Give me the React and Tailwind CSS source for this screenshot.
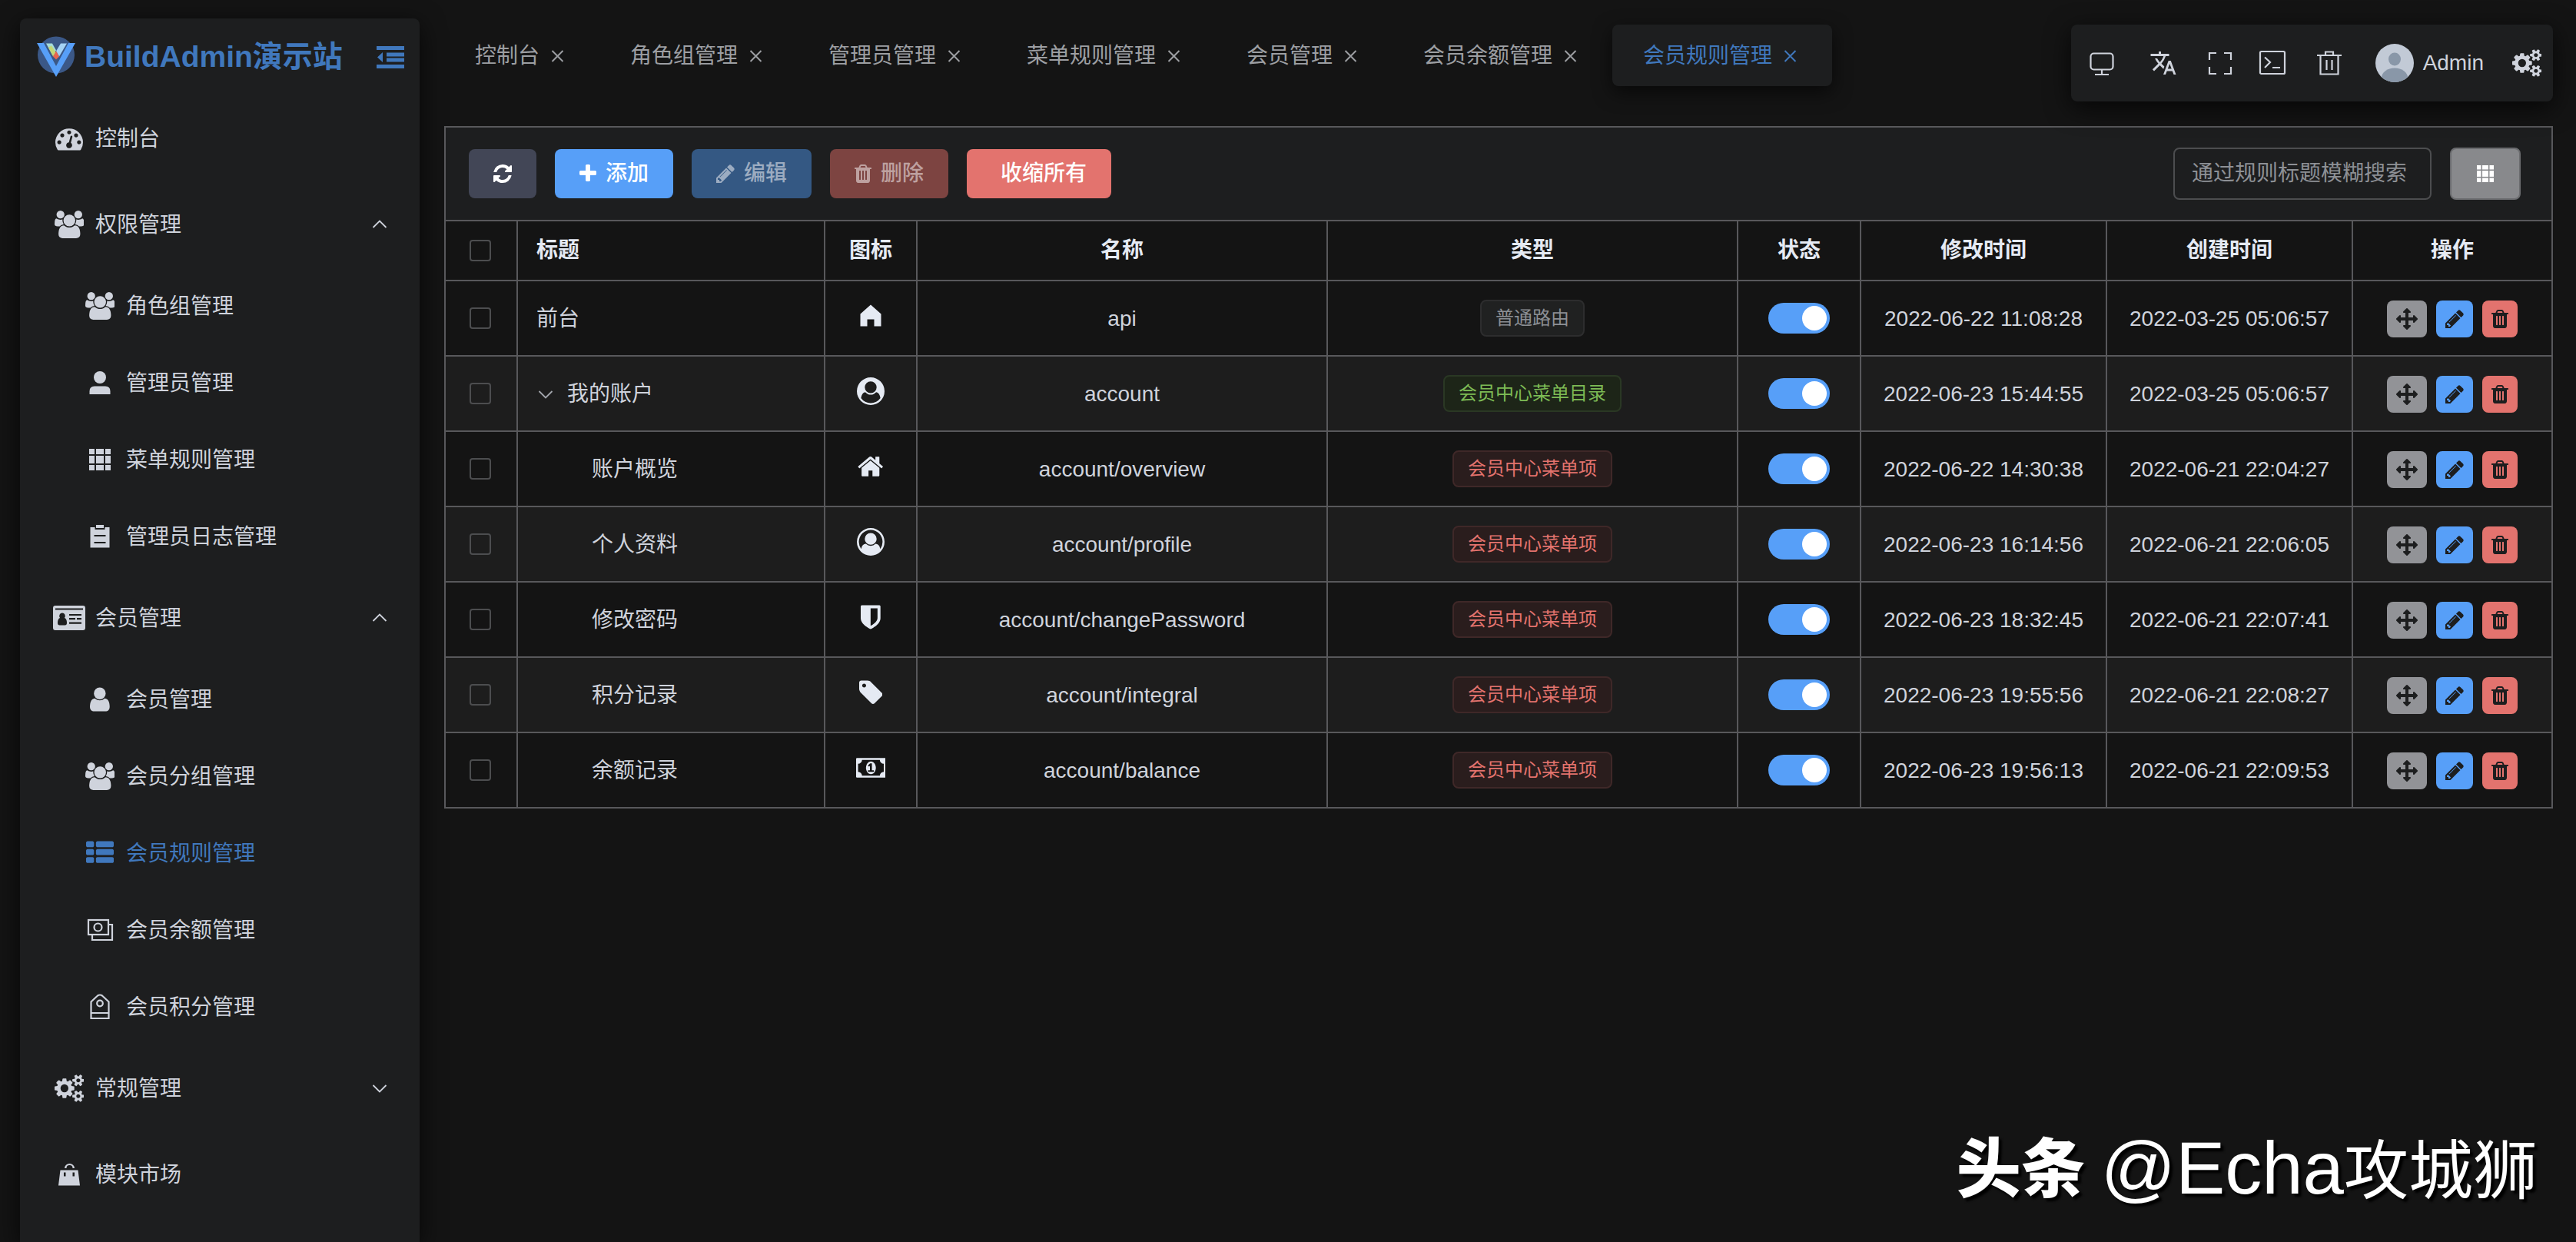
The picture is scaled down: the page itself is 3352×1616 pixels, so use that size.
import React, { useState } from "react";
import clsx from "clsx";
import { MdTranslate } from "react-icons/md";

// Font Awesome 4 glyphs, [viewBox, path]
const glyphs = {
  dashboard: [
    "0 0 1792 1792",
    "M384 1152q0-53-37.5-90.5t-90.5-37.5-90.5 37.5-37.5 90.5 37.5 90.5 90.5 37.5 90.5-37.5 37.5-90.5zm192-448q0-53-37.5-90.5t-90.5-37.5-90.5 37.5-37.5 90.5 37.5 90.5 90.5 37.5 90.5-37.5 37.5-90.5zm428 481l101-382q6-26-7.5-48.5t-38.5-29.5-48 6.5-30 39.5l-101 382q-60 5-107 43.5t-63 98.5q-20 77 20 146t117 89 146-20 89-117q16-60-6-117t-72-91zm660-33q0-53-37.5-90.5t-90.5-37.5-90.5 37.5-37.5 90.5 37.5 90.5 90.5 37.5 90.5-37.5 37.5-90.5zm-640-640q0-53-37.5-90.5t-90.5-37.5-90.5 37.5-37.5 90.5 37.5 90.5 90.5 37.5 90.5-37.5 37.5-90.5zm448 192q0-53-37.5-90.5t-90.5-37.5-90.5 37.5-37.5 90.5 37.5 90.5 90.5 37.5 90.5-37.5 37.5-90.5zm320 448q0 261-141 483-19 29-54 29h-1402q-35 0-54-29-141-221-141-483 0-182 71-348t191-286 286-191 348-71 348 71 286 191 191 286 71 348z",
  ],
  group: [
    "-64 0 1920 1792",
    "M529 896q-162 5-265 128h-134q-82 0-138-40.5t-56-118.5q0-353 124-353 6 0 43.5 21t97.5 42.5 119 21.5q67 0 133-23-5 37-5 66 0 139 81 256zm1071 637q0 120-73 189.5t-194 69.5h-874q-121 0-194-69.5t-73-189.5q0-53 3.5-103.5t14-109 26.5-108.5 43-97.5 62-81 85.5-53.5 111.5-20q10 0 43 21.5t73 48 107 48 135 21.5 135-21.5 107-48 73-48 43-21.5q61 0 111.5 20t85.5 53.5 62 81 43 97.5 26.5 108.5 14 109 3.5 103.5zm-1024-1277q0 106-75 181t-181 75-181-75-75-181 75-181 181-75 181 75 75 181zm704 384q0 159-112.5 271.5t-271.5 112.5-271.5-112.5-112.5-271.5 112.5-271.5 271.5-112.5 271.5 112.5 112.5 271.5zm576 225q0 78-56 118.5t-138 40.5h-134q-103-123-265-128 81-117 81-256 0-29-5-66 66 23 133 23 59 0 119-21.5t97.5-42.5 43.5-21q124 0 124 353zm-128-609q0 106-75 181t-181 75-181-75-75-181 75-181 181-75 181 75 75 181z",
  ],
  user: [
    "256 0 1280 1792",
    "M1536 1399q0 109-62.5 187t-150.5 78h-854q-88 0-150.5-78t-62.5-187q0-85 8.5-160.5t31.5-152 58.5-131 94-89 134.5-34.5q131 128 313 128t313-128q76 0 134.5 34.5t94 89 58.5 131 31.5 152 8.5 160.5zm-256-887q0 159-112.5 271.5t-271.5 112.5-271.5-112.5-112.5-271.5 112.5-271.5 271.5-112.5 271.5 112.5 112.5 271.5z",
  ],
  thList: [
    "0 0 1792 1792",
    "M512 1248v192q0 40-28 68t-68 28h-320q-40 0-68-28t-28-68v-192q0-40 28-68t68-28h320q40 0 68 28t28 68zm0-512v192q0 40-28 68t-68 28h-320q-40 0-68-28t-28-68v-192q0-40 28-68t68-28h320q40 0 68 28t28 68zm1280 512v192q0 40-28 68t-68 28h-960q-40 0-68-28t-28-68v-192q0-40 28-68t68-28h960q40 0 68 28t28 68zm-1280-1024v192q0 40-28 68t-68 28h-320q-40 0-68-28t-28-68v-192q0-40 28-68t68-28h320q40 0 68 28t28 68zm1280 512v192q0 40-28 68t-68 28h-960q-40 0-68-28t-28-68v-192q0-40 28-68t68-28h960q40 0 68 28t28 68zm0-512v192q0 40-28 68t-68 28h-960q-40 0-68-28t-28-68v-192q0-40 28-68t68-28h960q40 0 68 28t28 68z",
  ],
  cogs: [
    "-64 0 1920 1792",
    "M832 896q0-106-75-181t-181-75-181 75-75 181 75 181 181 75 181-75 75-181zm768 512q0-52-38-90t-90-38-90 38-38 90q0 53 37.5 90.5t90.5 37.5 90.5-37.5 37.5-90.5zm0-1024q0-52-38-90t-90-38-90 38-38 90q0 53 37.5 90.5t90.5 37.5 90.5-37.5 37.5-90.5zm-384 421v185q0 10-7 19.5t-16 10.5l-155 24q-11 35-32 76 34 48 90 115 7 11 7 20 0 12-7 19-23 30-82.5 89.5t-78.5 59.5q-11 0-21-7l-115-90q-37 19-77 31-11 108-23 155-7 24-30 24h-186q-11 0-20-7.5t-10-17.5l-23-153q-34-10-75-31l-118 89q-7 7-20 7-11 0-21-8-144-133-144-160 0-9 7-19 10-14 41-53t47-61q-23-44-35-82l-152-24q-10-1-17-9.5t-7-19.5v-185q0-10 7-19.5t16-10.5l155-24q11-35 32-76-34-48-90-115-7-11-7-20 0-12 7-20 22-30 82-89t79-59q11 0 21 7l115 90q34-18 77-32 11-108 23-154 7-24 30-24h186q11 0 20 7.5t10 17.5l23 153q34 10 75 31l118-89q8-7 20-7 11 0 21 8 144 133 144 160 0 8-7 19-12 16-42 54t-45 60q23 48 34 82l152 23q10 2 17 10.5t7 19.5zm640 533v140q0 16-149 31-12 27-30 52 51 113 51 138 0 4-4 7-122 71-124 71-8 0-46-47t-52-68q-20 2-30 2t-30-2q-14 21-52 68t-46 47q-2 0-124-71-4-3-4-7 0-25 51-138-18-25-30-52-149-15-149-31v-140q0-16 149-31 13-29 30-52-51-113-51-138 0-4 4-7 4-2 35-20t59-34 30-16q8 0 46 46.5t52 67.5q20-2 30-2t30 2q51-71 92-112l6-2q4 0 124 70 4 3 4 7 0 25-51 138 17 23 30 52 149 15 149 31zm0-1024v140q0 16-149 31-12 27-30 52 51 113 51 138 0 4-4 7-122 71-124 71-8 0-46-47t-52-68q-20 2-30 2t-30-2q-14 21-52 68t-46 47q-2 0-124-71-4-3-4-7 0-25 51-138-18-25-30-52-149-15-149-31v-140q0-16 149-31 13-29 30-52-51-113-51-138 0-4 4-7 4-2 35-20t59-34 30-16q8 0 46 46.5t52 67.5q20-2 30-2t30 2q51-71 92-112l6-2q4 0 124 70 4 3 4 7 0 25-51 138 17 23 30 52 149 15 149 31z",
  ],
  refresh: [
    "128 0 1536 1792",
    "M1639 1056q0 5-1 7-64 268-268 434.5t-478 166.5q-146 0-282.5-55t-243.5-157l-129 129q-19 19-45 19t-45-19-19-45v-448q0-26 19-45t45-19h448q26 0 45 19t19 45-19 45l-137 137q71 66 161 102t187 36q134 0 250-65t186-179q11-17 53-117 8-23 30-23h192q13 0 22.5 9.5t9.5 22.5zm25-800v448q0 26-19 45t-45 19h-448q-26 0-45-19t-19-45 19-45l138-138q-148-137-349-137-134 0-250 65t-186 179q-11 17-53 117-8 23-30 23h-199q-13 0-22.5-9.5t-9.5-22.5v-7q65-268 270-434.5t480-166.5q146 0 284 55.5t245 156.5l130-129q19-19 45-19t45 19 19 45z",
  ],
  plus: [
    "192 0 1408 1792",
    "M1600 736v192q0 40-28 68t-68 28h-416v416q0 40-28 68t-68 28h-192q-40 0-68-28t-28-68v-416h-416q-40 0-68-28t-28-68v-192q0-40 28-68t68-28h416v-416q0-40 28-68t68-28h192q40 0 68 28t28 68v416h416q40 0 68 28t28 68z",
  ],
  pencil: [
    "128 0 1536 1792",
    "M491 1536l91-91-235-235-91 91v107h128v128h107zm523-928q0-22-22-22-10 0-17 7l-542 542q-7 7-7 17 0 22 22 22 10 0 17-7l542-542q7-7 7-17zm-54-192l416 416-832 832h-416v-416zm683 96q0 53-37 90l-166 166-416-416 166-165q36-38 90-38 53 0 91 38l235 234q37 39 37 91z",
  ],
  trash: [
    "192 0 1408 1792",
    "M704 1376v-704q0-14-9-23t-23-9h-64q-14 0-23 9t-9 23v704q0 14 9 23t23 9h64q14 0 23-9t9-23zm256 0v-704q0-14-9-23t-23-9h-64q-14 0-23 9t-9 23v704q0 14 9 23t23 9h64q14 0 23-9t9-23zm256 0v-704q0-14-9-23t-23-9h-64q-14 0-23 9t-9 23v704q0 14 9 23t23 9h64q14 0 23-9t9-23zm-544-992h448l-48-117q-7-9-17-11h-317q-10 2-17 11zm928 32v64q0 14-9 23t-23 9h-96v948q0 83-47 143.5t-113 60.5h-832q-66 0-113-58.5t-47-141.5v-952h-96q-14 0-23-9t-9-23v-64q0-14 9-23t23-9h309l70-167q15-37 54-63t79-26h320q40 0 79 26t54 63l70 167h309q14 0 23 9t9 23z",
  ],
  arrows: [
    "0 0 1792 1792",
    "M1792 896q0 26-19 45l-256 256q-19 19-45 19t-45-19-19-45v-128h-384v384h128q26 0 45 19t19 45-19 45l-256 256q-19 19-45 19t-45-19l-256-256q-19-19-19-45t19-45 45-19h128v-384h-384v128q0 26-19 45t-45 19-45-19l-256-256q-19-19-19-45t19-45l256-256q19-19 45-19t45 19 19 45v128h384v-384h-128q-26 0-45-19t-19-45 19-45l256-256q19-19 45-19t45 19l256 256q19 19 19 45t-19 45-45 19h-128v384h384v-128q0-26 19-45t45-19 45 19l256 256q19 19 19 45z",
  ],
  home: [
    "64 0 1664 1792",
    "M1472 992v480q0 26-19 45t-45 19h-384v-384h-256v384h-384q-26 0-45-19t-19-45v-480q0-1 .5-3t.5-3l575-474 575 474q1 2 1 6zm223-69l-62 74q-8 9-21 11h-3q-13 0-21-7l-692-577-692 577q-12 8-24 7-13-2-21-11l-62-74q-8-10-7-23.5t11-21.5l719-599q32-26 76-26t76 26l244 204v-195q0-14 9-23t23-9h192q14 0 23 9t9 23v408l219 182q10 8 11 21.5t-7 23.5z",
  ],
  userCircle: [
    "0 0 1792 1792",
    "M1523 1339q-22-155-87.5-257.5t-184.5-118.5q-67 74-159.5 115.5t-195.5 41.5-195.5-41.5-159.5-115.5q-119 16-184.5 118.5t-87.5 257.5q106 150 271 237.5t356 87.5 356-87.5 271-237.5zm-243-699q0-159-112.5-271.5t-271.5-112.5-271.5 112.5-112.5 271.5 112.5 271.5 271.5 112.5 271.5-112.5 112.5-271.5zm512 256q0 182-71 347.5t-190.5 286-285.5 191.5-349 71q-182 0-348-71t-286-191-191-286-71-348 71-348 191-286 286-191 348-71 348 71 286 191 191 286 71 348z",
  ],
  userCircleO: [
    "0 0 1792 1792",
    "M896 0q182 0 348 71t286 191 191 286 71 348q0 181-70.5 347t-190.5 286-286 191.5-349 71.5-349-71-285.5-191.5-190.5-286-71-347.5 71-348 191-286 286-191 348-71zm619 1351q149-205 149-455 0-156-61-298t-164-245-245-164-298-61-298 61-245 164-164 245-61 298q0 250 149 455 66-327 306-327 131 128 313 128t313-128q240 0 306 327zm-235-647q0-159-112.5-271.5t-271.5-112.5-271.5 112.5-112.5 271.5 112.5 271.5 271.5 112.5 271.5-112.5 112.5-271.5z",
  ],
  shield: [
    "256 0 1280 1792",
    "M1344 960v-640h-448v1137q119-63 213-137 235-184 235-360zm192-768v768q0 86-33.5 170.5t-83 150-118 127.5-126.5 103-121 77.5-89.5 49.5-42.5 20q-12 6-26 6t-26-6q-16-7-42.5-20t-89.5-49.5-121-77.5-126.5-103-118-127.5-83-150-33.5-170.5v-768q0-26 19-45t45-19h1152q26 0 45 19t19 45z",
  ],
  tag: [
    "128 0 1536 1792",
    "M576 448q0-53-37.5-90.5t-90.5-37.5-90.5 37.5-37.5 90.5 37.5 90.5 90.5 37.5 90.5-37.5 37.5-90.5zm1067 576q0 53-37 90l-491 492q-39 37-91 37-53 0-90-37l-715-716q-38-37-64.5-101t-26.5-117v-416q0-52 38-90t90-38h416q53 0 117 26.5t102 64.5l715 714q37 39 37 91z",
  ],
  money: [
    "0 0 1920 1792",
    "M768 1152h384v-96h-128v-448h-114l-148 137 77 80q42-37 55-57h2v288h-128v96zm512-256q0 70-21 142t-59.5 134-101.5 101-138 39-138-39-101.5-101-59.5-134-21-142 21-142 59.5-134 101.5-101 138-39 138 39 101.5 101 59.5 134 21 142zm512 256v-512q-106 0-181-75t-75-181h-1152q0 106-75 181t-181 75v512q106 0 181 75t75 181h1152q0-106 75-181t181-75zm128-832v1152q0 26-19 45t-45 19h-1792q-26 0-45-19t-19-45v-1152q0-26 19-45t45-19h1792q26 0 45 19t19 45z",
  ],
};

const Glyph = ({ name, className = "h-9" }) => (
  <svg viewBox={glyphs[name][0]} fill="currentColor" className={clsx("w-auto shrink-0", className)} aria-hidden="true">
    <path d={glyphs[name][1]} />
  </svg>
);

// Outline icons on a 36 grid
const Line = ({ children }) => (
  <svg viewBox="0 0 36 36" fill="none" stroke="currentColor" strokeWidth="2.2" className="size-9 shrink-0" aria-hidden="true">
    {children}
  </svg>
);

const Solid = ({ children }) => (
  <svg viewBox="0 0 36 36" fill="currentColor" className="size-9 shrink-0" aria-hidden="true">
    {children}
  </svg>
);

const GridIcon = ({ className = "size-7" }) => (
  <svg viewBox="0 0 28 28" fill="currentColor" className={className} aria-hidden="true">
    {[[0, 7], [9, 10], [21, 7]].map(([y, h]) =>
      [[0, 7], [9, 10], [21, 7]].map(([x, w]) => <rect key={`${x}-${y}`} x={x} y={y} width={w} height={h} />)
    )}
  </svg>
);

const AdminIcon = () => (
  <Solid>
    <circle cx="18" cy="11" r="8" />
    <path d="M4.500 33v-4q0-6.500 6.500-6.500h14q6.500 0 6.500 6.500v4z" />
  </Solid>
);

const ClipboardIcon = () => (
  <Solid>
    <path d="M5.500 6h6v3h13v-3h6v26.500h-25zM13 3h10v4h-10zM10.500 16v2h15v-2zM10.500 25v2h15v-2z" fillRule="evenodd" />
  </Solid>
);

const CardIcon = () => (
  <svg viewBox="0 0 42 32" fill="currentColor" className="h-8 w-[42px] shrink-0" aria-hidden="true">
    <path
      fillRule="evenodd"
      d="M3 0h36q3 0 3 3v26q0 3-3 3h-36q-3 0-3-3v-26q0-3 3-3zM3 3.500v2h36v-2zM12 9.500a3.800 4 0 0 0-3 6.500q-3 1-3 6.500 0 3 2.500 3h7q2.500 0 2.500-3 0-5.500-3-6.500a3.800 4 0 0 0-3-6.500zM21 11v2h16v-2zM21 16v2.300h8v-2.300zM31 16v2.300h6v-2.300zM21 21.500v2.300h16v-2.300z"
    />
  </svg>
);

const BalanceIcon = () => (
  <Line>
    <rect x="3" y="5" width="26" height="19" />
    <circle cx="15.500" cy="14.500" r="5" />
    <path d="M29 11h5v20h-26v-7" />
  </Line>
);

const PointsIcon = () => (
  <Line>
    <path d="M6.500 33v-21.500l8.500-8q3-2 6 0l8.500 8v21.500zM6.500 26h23" />
    <circle cx="18" cy="13.500" r="3.800" />
  </Line>
);

const BagIcon = () => (
  <Solid>
    <path d="M12 10a6.500 6 0 0 1 13 0h-2.500a4 4 0 0 0-8 0z" />
    <path d="M6.500 12.500h23l2.500 20h-28zM11 15.500v5h2.500v-5zM22.500 15.500v5h2.500v-5z" fillRule="evenodd" />
  </Solid>
);

const HouseIcon = () => (
  <Solid>
    <path d="M18 3.500l13.500 12v16h-9v-9h-9v9h-9v-16z" />
  </Solid>
);

const Chevron = ({ up }) => (
  <svg viewBox="0 0 24 24" fill="none" stroke="currentColor" strokeWidth="1.800" className={clsx("size-6 shrink-0", up && "rotate-180")} aria-hidden="true">
    <path d="M3.500 8l8.500 8.500 8.500-8.500" />
  </svg>
);

const Logo = () => (
  <svg viewBox="0 0 50 54" className="h-[54px] w-[50px] shrink-0" aria-hidden="true">
    <circle cx="25" cy="24.500" r="24" fill="#3b5887" />
    <path d="M0 9h9l16 30 16-30h9l-25 44z" fill="#579ff8" />
    <path d="M12 9.500h8l5 9-5 6z" fill="#a5dbd8" />
    <path d="M15 14.500l4-2 6 9-4 5z" fill="#c3d877" />
    <path d="M25 19.500l6-10h8l-10 17z" fill="#a5d3f5" />
    <path d="M25 19.500l4 7-4 4-4-4z" fill="#e8654e" />
  </svg>
);

const menus = [
  { title: "控制台", icon: <Glyph name="dashboard" /> },
  {
    title: "权限管理",
    icon: <Glyph name="group" />,
    children: [
      { title: "角色组管理", icon: <Glyph name="group" /> },
      { title: "管理员管理", icon: <AdminIcon /> },
      { title: "菜单规则管理", icon: <GridIcon /> },
      { title: "管理员日志管理", icon: <ClipboardIcon /> },
    ],
  },
  {
    title: "会员管理",
    icon: <CardIcon />,
    children: [
      { title: "会员管理", icon: <Glyph name="user" /> },
      { title: "会员分组管理", icon: <Glyph name="group" /> },
      { title: "会员规则管理", icon: <Glyph name="thList" />, active: true },
      { title: "会员余额管理", icon: <BalanceIcon /> },
      { title: "会员积分管理", icon: <PointsIcon /> },
    ],
  },
  { title: "常规管理", icon: <Glyph name="cogs" />, children: [] },
  { title: "模块市场", icon: <BagIcon /> },
];

const tabs = ["控制台", "角色组管理", "管理员管理", "菜单规则管理", "会员管理", "会员余额管理", "会员规则管理"];

const rules = [
  { title: "前台", level: 0, icon: <HouseIcon />, name: "api", type: "route", updated: "2022-06-22 11:08:28", created: "2022-03-25 05:06:57" },
  { title: "我的账户", level: 0, open: true, icon: <Glyph name="userCircle" />, name: "account", type: "dir", updated: "2022-06-23 15:44:55", created: "2022-03-25 05:06:57" },
  { title: "账户概览", level: 1, icon: <Glyph name="home" />, name: "account/overview", type: "item", updated: "2022-06-22 14:30:38", created: "2022-06-21 22:04:27" },
  { title: "个人资料", level: 1, icon: <Glyph name="userCircleO" />, name: "account/profile", type: "item", updated: "2022-06-23 16:14:56", created: "2022-06-21 22:06:05" },
  { title: "修改密码", level: 1, icon: <Glyph name="shield" />, name: "account/changePassword", type: "item", updated: "2022-06-23 18:32:45", created: "2022-06-21 22:07:41" },
  { title: "积分记录", level: 1, icon: <Glyph name="tag" />, name: "account/integral", type: "item", updated: "2022-06-23 19:55:56", created: "2022-06-21 22:08:27" },
  { title: "余额记录", level: 1, icon: <Glyph name="money" />, name: "account/balance", type: "item", updated: "2022-06-23 19:56:13", created: "2022-06-21 22:09:53" },
];

const types = {
  route: { label: "普通路由", style: "bg-[#202121] border-[#2d2d2e] text-[#8c8f94]" },
  dir: { label: "会员中心菜单目录", style: "bg-[#1d2518] border-[#2a3824] text-[#7dbb55]" },
  item: { label: "会员中心菜单项", style: "bg-[#2a1d1d] border-[#3f2828] text-[#e3736e]" },
};

const SubItem = ({ item }) => (
  <a
    href="#"
    className={clsx("flex h-25 items-center gap-2.5 pl-20 pr-10", item.active ? "text-[#4078bd]" : "text-[#cfd3dc]")}
  >
    <span className="flex w-12 justify-center">{item.icon}</span>
    <span className="pt-0.5">{item.title}</span>
  </a>
);

const Sidebar = () => {
  const [opened, setOpened] = useState(["权限管理", "会员管理"]);

  const toggle = (title) => {
    setOpened(opened.includes(title) ? opened.filter((t) => t !== title) : [...opened, title]);
  };

  return (
    <aside className="mt-6 ml-[26px] w-[520px] shrink-0 rounded-t-lg bg-[#1d1e1f] text-[#cfd3dc] shadow-[0_8px_32px_rgba(0,0,0,0.72)]">
      <div className="flex h-25 items-center pl-[22px] pr-5 text-[#4078bd]">
        <Logo />
        <h1 className="ml-3 flex-1 whitespace-nowrap text-[39px] leading-[52px] font-bold">BuildAdmin演示站</h1>
        <button type="button" aria-label="收起菜单">
          <svg viewBox="0 0 36 36" fill="currentColor" className="size-9" aria-hidden="true">
            <path d="M0 4h36v5h-36zM13 12.500h23v5h-23zM13 19.500h23v5h-23zM0 28h36v5h-36zM8 12v13l-7-6.500z" />
          </svg>
        </button>
      </div>
      <nav>
        {menus.map((menu) =>
          menu.children ? (
            <div key={menu.title}>
              <button
                type="button"
                onClick={() => toggle(menu.title)}
                className="flex h-28 w-full items-center gap-2.5 px-10 text-left"
              >
                <span className="flex w-12 justify-center">{menu.icon}</span>
                <span className="flex-1 pt-0.5">{menu.title}</span>
                <Chevron up={opened.includes(menu.title)} />
              </button>
              {opened.includes(menu.title) && menu.children.map((item) => <SubItem key={item.title} item={item} />)}
            </div>
          ) : (
            <a key={menu.title} href="#" className="flex h-28 items-center gap-2.5 px-10">
              <span className="flex w-12 justify-center">{menu.icon}</span>
              <span className="pt-0.5">{menu.title}</span>
            </a>
          )
        )}
      </nav>
    </aside>
  );
};

const NavTabs = () => {
  const [active, setActive] = useState("会员规则管理");

  return (
    <div className="flex">
      {tabs.map((tab) => (
        <div
          key={tab}
          className={clsx(
            "flex h-20 items-center gap-2.5 rounded-lg px-10 whitespace-nowrap",
            active === tab ? "bg-[#1d1e1f] text-[#4078bd] shadow-[0_8px_24px_rgba(0,0,0,0.6)]" : "text-[#9d9fa3]"
          )}
        >
          <button type="button" onClick={() => setActive(tab)} className="pt-0.5">
            {tab}
          </button>
          <button type="button" aria-label={`关闭${tab}`}>
            <svg viewBox="0 0 28 28" fill="none" stroke="currentColor" strokeWidth="2" className="size-7" aria-hidden="true">
              <path d="M6.500 8l14 14M20.500 8l-14 14" />
            </svg>
          </button>
        </div>
      ))}
    </div>
  );
};

const NavMenus = () => (
  <div className="flex h-25 items-stretch rounded-lg bg-[#1d1e1f] text-[#cfd3dc] shadow-[0_8px_32px_rgba(0,0,0,0.72)]">
    <button type="button" aria-label="首页" className="flex w-20 items-center justify-center">
      <Line>
        <rect x="3.500" y="5.500" width="29" height="21" rx="4" />
        <path d="M18 26.500v6.500M9 33h18" />
      </Line>
    </button>
    <button type="button" aria-label="语言" className="flex w-20 items-center justify-center">
      <MdTranslate className="size-9" />
    </button>
    <button type="button" aria-label="全屏" className="flex w-17 items-center justify-center">
      <Line>
        <path d="M4 14v-9h9M23 5h9v9M32 23v9h-9M13 32h-9v-9" />
      </Line>
    </button>
    <button type="button" aria-label="终端" className="flex w-17 items-center justify-center">
      <Line>
        <rect x="2" y="3" width="32" height="29" rx="1.500" />
        <path d="M8 10.500l7 6.500-7 7M18 24h10" />
      </Line>
    </button>
    <button type="button" aria-label="清理缓存" className="flex w-20 items-center justify-center">
      <Line>
        <path d="M2 8h32M13 8v-4.500h10v4.500M6.500 8v24.500h23v-24.500M14.500 14v13M21.500 14v13" />
      </Line>
    </button>
    <button type="button" className="flex items-center gap-3 pr-5.5 pl-5">
      <svg viewBox="0 0 50 50" className="size-[50px] rounded-full" aria-hidden="true">
        <rect width="50" height="50" fill="#c2cad6" />
        <ellipse cx="25" cy="20" rx="8" ry="8.500" fill="#8997a8" />
        <ellipse cx="25" cy="44" rx="17" ry="12.500" fill="#8997a8" />
      </svg>
      Admin
    </button>
    <button type="button" aria-label="设置" className="flex w-17 items-center justify-center">
      <Glyph name="cogs" />
    </button>
  </div>
);

const Toolbar = () => {
  const [keyword, setKeyword] = useState("");

  return (
    <div className="flex h-[122px] items-center border-b-2 border-[#58585b] bg-[#1d1e1f] pl-[30px] pr-10">
      <div className="flex flex-1 items-center gap-6 font-medium text-white">
        <button type="button" aria-label="刷新" className="flex h-16 items-center rounded-lg bg-[#424656] px-8">
          <Glyph name="refresh" className="h-7" />
        </button>
        <button type="button" className="flex h-16 items-center gap-3 rounded-lg bg-[#579ff8] px-8">
          <Glyph name="plus" className="h-7" />
          添加
        </button>
        <button type="button" disabled className="flex h-16 items-center gap-3 rounded-lg bg-[#345883] px-8 text-[#9cacc1]">
          <Glyph name="pencil" className="h-7" />
          编辑
        </button>
        <button type="button" disabled className="flex h-16 items-center gap-3 rounded-lg bg-[#7d4441] px-8 text-[#bea1a0]">
          <Glyph name="trash" className="h-7" />
          删除
        </button>
        <button type="button" className="flex h-16 items-center rounded-lg bg-[#e3736e] pl-11 pr-8">
          收缩所有
        </button>
      </div>
      <input
        type="text"
        aria-label="搜索"
        placeholder="通过规则标题模糊搜索"
        value={keyword}
        onChange={(e) => setKeyword(e.target.value)}
        className="mr-6 h-17 w-84 rounded-lg border-2 border-[#4c4d4f] bg-transparent px-[22px] text-[#cfd3dc] placeholder:text-[#8d9095]"
      />
      <button
        type="button"
        aria-label="列设置"
        className="flex h-17 w-23 items-center justify-center rounded-lg border-2 border-[#6b6c6f] bg-[#88898c] text-white"
      >
        <GridIcon className="size-[22px]" />
      </button>
    </div>
  );
};

const checkbox = "block mx-auto size-7 appearance-none rounded border-2 border-[#4c4d4f] checked:bg-[#579ff8]";
const cell = "border-r-2 border-b-2 border-[#58585b] last:border-r-0";

const RuleRow = ({ rule, striped }) => {
  const [enabled, setEnabled] = useState(true);
  const type = types[rule.type];

  return (
    <tr className={clsx("h-[98px]", striped && "bg-[#1d1d1d]")}>
      <td className={clsx(cell, "pr-0.5")}>
        <input type="checkbox" aria-label={`选择${rule.title}`} className={checkbox} />
      </td>
      <td className={clsx(cell, "px-6 pt-0.5 text-left")}>
        <div className={clsx("flex items-center", rule.level === 1 && "pl-18")}>
          {rule.open && (
            <button type="button" aria-label="收起" className="mr-4 text-[#a3a6ad]">
              <Chevron />
            </button>
          )}
          {rule.title}
        </div>
      </td>
      <td className={clsx(cell, "pb-1.5 text-[#e5eaf3]")}>
        <span className="flex justify-center">{rule.icon}</span>
      </td>
      <td className={clsx(cell, "pt-0.5")}>{rule.name}</td>
      <td className={cell}>
        <span className={clsx("inline-flex h-12 items-center rounded-lg border-2 px-[18px] align-middle text-2xl", type.style)}>
          {type.label}
        </span>
      </td>
      <td className={cell}>
        <input
          type="checkbox"
          role="switch"
          aria-label={`${rule.title}状态`}
          checked={enabled}
          onChange={() => setEnabled(!enabled)}
          className="mx-auto flex h-10 w-20 appearance-none rounded-full bg-[#4c4d4f] p-1 before:block before:size-8 before:rounded-full before:bg-white checked:bg-[#579ff8] checked:before:ml-auto"
        />
      </td>
      <td className={clsx(cell, "pt-0.5 whitespace-nowrap")}>{rule.updated}</td>
      <td className={clsx(cell, "pt-0.5 whitespace-nowrap")}>{rule.created}</td>
      <td className={clsx(cell, "pt-0.5")}>
        <div className="flex justify-center gap-3 text-[#1d1e1f]">
          <button type="button" aria-label="拖动排序" className="flex h-12 items-center rounded-lg bg-[#929397] px-3">
            <Glyph name="arrows" className="h-7" />
          </button>
          <button type="button" aria-label="编辑" className="flex h-12 items-center rounded-lg bg-[#579ff8] px-3">
            <Glyph name="pencil" className="h-7" />
          </button>
          <button type="button" aria-label="删除" className="flex h-12 items-center rounded-lg bg-[#e3736e] px-3">
            <Glyph name="trash" className="h-7" />
          </button>
        </div>
      </td>
    </tr>
  );
};

const RuleTable = () => (
  <table className="w-full table-fixed border-separate border-spacing-0 text-center text-[#cfd3dc]">
    <colgroup>
      <col className="w-[94px]" />
      <col className="w-[400px]" />
      <col className="w-[120px]" />
      <col />
      <col />
      <col className="w-[160px]" />
      <col className="w-[320px]" />
      <col className="w-[320px]" />
      <col className="w-[258px]" />
    </colgroup>
    <thead>
      <tr className="h-[78px] text-[#e5eaf3]">
        <th scope="col" className={clsx(cell, "pr-0.5")}>
          <input type="checkbox" aria-label="全选" className={checkbox} />
        </th>
        <th scope="col" className={clsx(cell, "px-6 text-left")}>标题</th>
        {["图标", "名称", "类型", "状态", "修改时间", "创建时间", "操作"].map((title) => (
          <th key={title} scope="col" className={cell}>
            {title}
          </th>
        ))}
      </tr>
    </thead>
    <tbody>
      {rules.map((rule, index) => (
        <RuleRow key={rule.name} rule={rule} striped={index % 2 === 1} />
      ))}
    </tbody>
  </table>
);

const App = () => {
  return (
    <div className="relative flex min-h-screen bg-[#141414] font-['Liberation_Sans','Noto_Sans_CJK_SC',sans-serif] text-[28px] leading-10">
      <Sidebar />
      <main className="min-w-0 flex-1 pt-8 pr-[30px] pl-8">
        <header className="flex items-start justify-between">
          <NavTabs />
          <NavMenus />
        </header>
        <section className="mt-8 border-2 border-b-0 border-[#58585b]">
          <Toolbar />
          <RuleTable />
        </section>
      </main>
      <div className="absolute right-[50px] bottom-8 flex items-center gap-5 text-[84px] leading-[120px] whitespace-nowrap text-white [text-shadow:4px_4px_3px_#000]">
        <span className="font-black">头条</span>
        <span>
          <span className="text-[96px]">@Echa</span>攻城狮
        </span>
      </div>
    </div>
  );
};

export default App;
